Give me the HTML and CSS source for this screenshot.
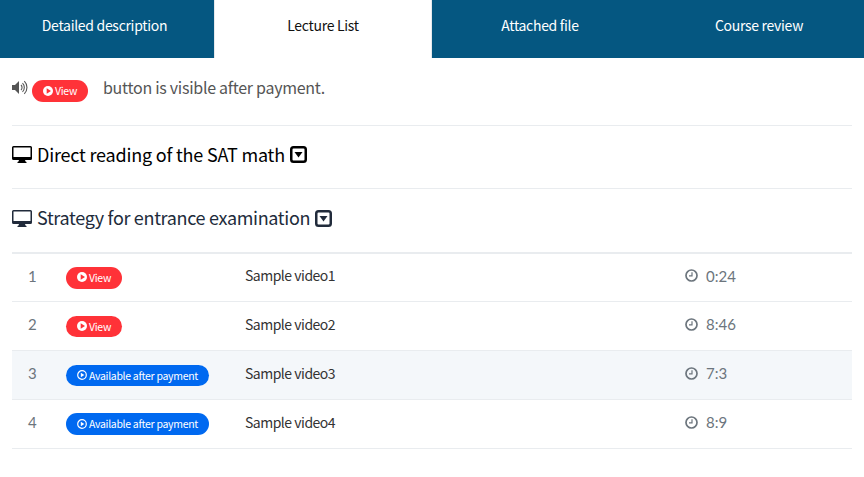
FILE: index.html
```html
<!DOCTYPE html>
<html lang="en">
<head>
<meta charset="utf-8">
<title>Lecture List</title>
<link rel="stylesheet" href="styles.css">
</head>
<body>
<svg class="defs" width="0" height="0" aria-hidden="true">
  <symbol id="play" viewBox="0 0 10 10"><circle cx="5" cy="5" r="5" fill="#fff"/><path d="M3.700 2.300 8 5 3.700 7.700z" fill="#ff3238"/></symbol>
  <symbol id="play-o" viewBox="0 0 10 10"><circle cx="5" cy="5" r="4.300" fill="none" stroke="#fff" stroke-width="1.200"/><path d="M3.800 2.800 7.300 5 3.800 7.200z" fill="#fff"/></symbol>
  <symbol id="desktop" viewBox="0 0 20 17"><path fill-rule="evenodd" d="M1.500 0h17A1.500 1.500 0 0 1 20 1.500v11a1.500 1.500 0 0 1-1.500 1.500H13l.5 1.500 1 .4v1.100h-9v-1.100l1-.4.500-1.500H1.500A1.500 1.500 0 0 1 0 12.500v-11A1.500 1.500 0 0 1 1.500 0zM1.500 1.400v9.700h17V1.400z" fill="currentColor"/></symbol>
  <symbol id="caret" viewBox="0 0 17 17"><path fill-rule="evenodd" d="M3.500 0h10A3.500 3.500 0 0 1 17 3.500v10a3.500 3.500 0 0 1-3.500 3.500h-10A3.500 3.500 0 0 1 0 13.500v-10A3.500 3.500 0 0 1 3.500 0zM3.500 2.500a1 1 0 0 0-1 1v10a1 1 0 0 0 1 1h10a1 1 0 0 0 1-1v-10a1 1 0 0 0-1-1z" fill="currentColor"/><path d="M4.500 6h8L8.500 11.500z" fill="currentColor"/></symbol>
  <symbol id="clock" viewBox="0 0 13 13"><circle cx="6.500" cy="6.500" r="5.500" fill="none" stroke="currentColor" stroke-width="1.700"/><path d="M7 3.200v3.700H4" fill="none" stroke="currentColor" stroke-width="1.200"/></symbol>
</svg>
<nav class="tabs">
  <a class="tab">Detailed description</a>
  <a class="tab tab-active">Lecture List</a>
  <a class="tab">Attached file</a>
  <a class="tab">Course review</a>
</nav>
<main class="content">
  <p class="notice">
    <svg class="speaker" viewBox="0 0 16 15" aria-hidden="true"><path d="M0 5h3l4-4v13l-4-4H0z" fill="currentColor"/><path d="M9 5a3.500 3.500 0 0 1 0 5M10.500 3.200a6 6 0 0 1 0 8.600M12.300 1.200a8.800 8.800 0 0 1 0 12.600" fill="none" stroke="currentColor" stroke-width="1.100"/></svg>
    <span class="pill pill-red notice-pill"><svg class="pill-icon"><use href="#play"/></svg>View</span>
    <span class="notice-text">button is visible after payment.</span>
  </p>
  <h3 class="section section-first">
    <svg class="monitor"><use href="#desktop"/></svg><span class="section-title">Direct reading of the SAT math</span><svg class="caret"><use href="#caret"/></svg>
  </h3>
  <h3 class="section section-open">
    <svg class="monitor"><use href="#desktop"/></svg><span class="section-title">Strategy for entrance examination</span><svg class="caret"><use href="#caret"/></svg>
  </h3>
  <ul class="lectures">
    <li class="row">
      <span class="num">1</span>
      <span class="action"><span class="pill pill-red"><svg class="pill-icon"><use href="#play"/></svg>View</span></span>
      <span class="name">Sample video1</span>
      <span class="time"><svg class="clock"><use href="#clock"/></svg>0:24</span>
    </li>
    <li class="row">
      <span class="num">2</span>
      <span class="action"><span class="pill pill-red"><svg class="pill-icon"><use href="#play"/></svg>View</span></span>
      <span class="name">Sample video2</span>
      <span class="time"><svg class="clock"><use href="#clock"/></svg>8:46</span>
    </li>
    <li class="row row-shaded">
      <span class="num">3</span>
      <span class="action"><span class="pill pill-blue"><svg class="pill-icon"><use href="#play-o"/></svg>Available after payment</span></span>
      <span class="name">Sample video3</span>
      <span class="time"><svg class="clock"><use href="#clock"/></svg>7:3</span>
    </li>
    <li class="row">
      <span class="num">4</span>
      <span class="action"><span class="pill pill-blue"><svg class="pill-icon"><use href="#play-o"/></svg>Available after payment</span></span>
      <span class="name">Sample video4</span>
      <span class="time"><svg class="clock"><use href="#clock"/></svg>8:9</span>
    </li>
  </ul>
</main>
</body>
</html>
```

FILE: styles.css
```css
* { box-sizing: border-box; }
html, body { margin: 0; padding: 0; }
body {
  background: #fff;
  color: #212529;
  font-family: "Noto Sans CJK KR", "Noto Sans", sans-serif;
  font-size: 14px;
  overflow: hidden;
}
.defs { position: absolute; }
.tabs { display: grid; grid-template-columns: 214px 218px 216px 216px; height: 58px; background: #055781; }
.tab {
  display: flex; align-items: center; justify-content: center;
  color: #fff; font-size: 14px; font-weight: 400;
  letter-spacing: -0.3px;
  padding-bottom: 8px;
}
.tab:nth-child(1) { padding-right: 5px; }
.tab:nth-child(4) { padding-left: 6px; }
.tab-active { background: #fff; color: #111; border-left: 1px solid #e6e9ec; border-right: 1px solid #e6e9ec; }
.content { padding: 0 12px; }
.notice {
  margin: 0; height: 68px; padding-top: 18px;
  display: flex; align-items: flex-start;
  border-bottom: 1px solid #e9ecef;
  color: #555;
  font-size: 16px;
}
.speaker { width: 16px; height: 15px; margin-top: 4px; color: #555; }
.notice-pill { margin: 4px 0 0 4px; }
.notice-text { margin-left: 15px; line-height: 22px; letter-spacing: -0.28px; }
.pill {
  display: inline-flex; align-items: center;
  height: 22px; padding: 0 11px 1px;
  border-radius: 11px;
  color: #fff; font-size: 10.500px;
  letter-spacing: -0.3px;
  white-space: nowrap;
}
.row:nth-child(2) .pill, .row:nth-child(3) .pill { height: 21px; margin-top: 1px; }
.pill-icon { width: 10px; height: 10px; margin-right: 2px; flex: none; }
.pill-red { background: #ff3238; }
.pill-blue { background: #0069f0; }
.section {
  margin: 0; font-size: 18px; font-weight: 400;
  display: flex; align-items: center;
  border-bottom: 1px solid #e9ecef;
  color: #000;
  padding-bottom: 5px;
}
.section-title { letter-spacing: -0.33px; position: relative; top: -1px; }
.section-first { height: 63px; }
.section-first .section-title { letter-spacing: -0.2px; }
.section-open { height: 65px; color: #212b3b; border-bottom: 2px solid #e9ecef; }
.monitor { width: 20px; height: 17px; margin-right: 5px; }
.caret { width: 17px; height: 17px; margin-left: 5px; }
.lectures { margin: 0; padding: 0; list-style: none; }
.row {
  display: flex; align-items: center;
  height: 49px;
  border-bottom: 1px solid #e9ecef;
  color: #333;
}
.row:first-child { height: 48px; }
.row-shaded { background: #f4f7fa; }
.num { width: 54px; padding: 0 0 4px 16px; color: #6c757d; font-family: "Lato", sans-serif; font-size: 15px; }
.action { width: 179px; display: flex; }
.name { flex: 1; letter-spacing: -0.5px; padding-bottom: 5px; }
.time { width: 167px; display: flex; align-items: center; color: #6c757d; font-family: "Lato", sans-serif; font-size: 15px; padding-bottom: 4px; }
.clock { width: 13px; height: 13px; margin-right: 8px; }
```
